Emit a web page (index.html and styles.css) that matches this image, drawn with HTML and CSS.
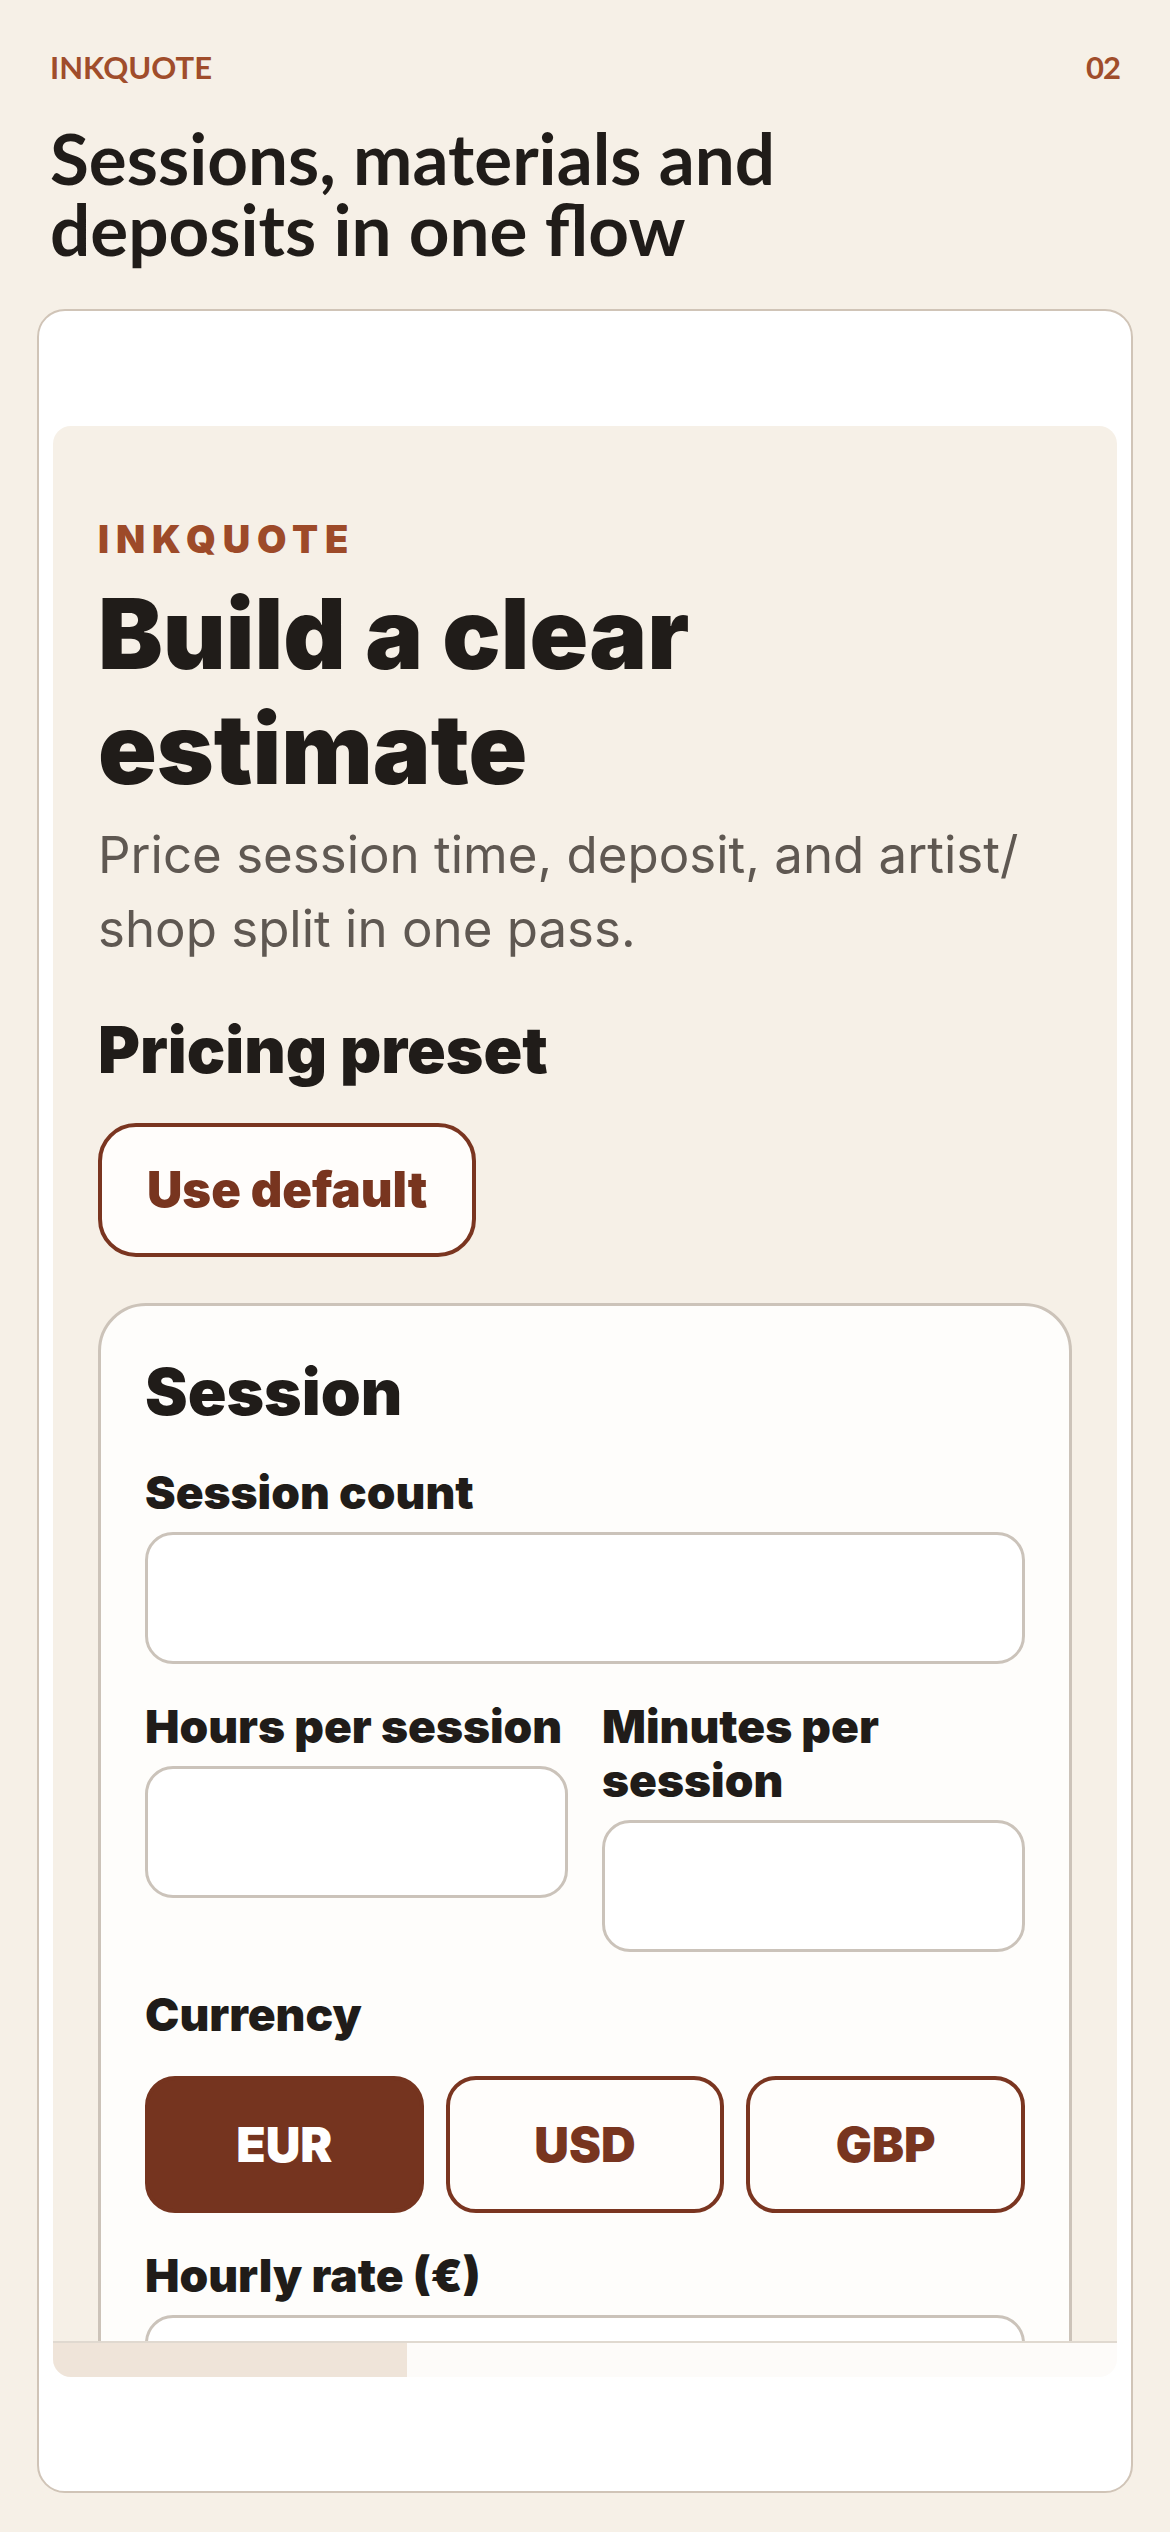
FILE: index.html
```html
<!DOCTYPE html>
<html lang="en">
<head>
<meta charset="utf-8">
<title>InkQuote – Sessions, materials and deposits</title>
<link rel="stylesheet" href="styles.css">
</head>
<body>
<header class="top">
  <span class="brand">INKQUOTE</span>
  <span class="num">02</span>
</header>
<h1 class="title">Sessions, materials and deposits in one flow</h1>

<section class="device">
  <div class="frame">
    <div class="viewport">
      <div class="app">
        <p class="eyebrow">INKQUOTE</p>
        <h2 class="hero">Build a clear estimate</h2>
        <p class="lede">Price session time, deposit, and artist/<wbr>shop split in one pass.</p>
        <h3 class="section-title preset-title">Pricing preset</h3>
        <button class="btn-outline" type="button">Use default</button>

        <div class="card">
          <h3 class="section-title">Session</h3>
          <label class="field">
            <span class="label">Session count</span>
            <input class="input" type="text">
          </label>
          <div class="row">
            <label class="field">
              <span class="label">Hours per session</span>
              <input class="input" type="text">
            </label>
            <label class="field">
              <span class="label">Minutes per session</span>
              <input class="input" type="text">
            </label>
          </div>
          <div class="label">Currency</div>
          <div class="seg">
            <button class="seg-btn active" type="button">EUR</button>
            <button class="seg-btn" type="button">USD</button>
            <button class="seg-btn" type="button">GBP</button>
          </div>
          <label class="field">
            <span class="label">Hourly rate (€)</span>
            <input class="input" type="text">
          </label>
        </div>
      </div>
    </div>
    <div class="scrollbar"><div class="thumb"></div></div>
  </div>
</section>
</body>
</html>
```

FILE: styles.css
```css
* { box-sizing: border-box; }

body {
  margin: 0;
  background: #f6f0e7;
  padding: 48px 37px 39px;
  font-family: Inter, "Noto Sans", sans-serif;
  font-optical-sizing: none;
  color: #201c19;
}

.top {
  display: flex;
  justify-content: space-between;
  padding: 0 13px;
  font-family: Lato, "Open Sans", sans-serif;
  font-weight: 700;
  font-size: 31px;
  line-height: 38px;
  color: #a04d2b;
}

.num {
  letter-spacing: -0.03em;
}

.title {
  margin: 36px 13px 45px;
  max-width: 900px;
  font-family: Lato, "Open Sans", sans-serif;
  font-weight: 700;
  font-size: 71px;
  line-height: 71px;
  color: #201c19;
}

.device {
  background: #ffffff;
  border: 2px solid #d0c4b7;
  border-radius: 28px;
  padding: 115px 14px 114px;
}

.frame {
  border-radius: 18px;
  overflow: hidden;
}

.viewport {
  height: 1915px;
  overflow: hidden;
  background: #f6f0e7;
}

.app {
  padding: 90px 45px 60px;
  display: flex;
  flex-direction: column;
  align-items: flex-start;
}

.eyebrow {
  margin: 0 0 14px;
  font-weight: 900;
  font-size: 38px;
  line-height: 46px;
  letter-spacing: 0.18em;
  color: #9d4a29;
}

.hero {
  margin: 0 0 12px;
  font-weight: 900;
  font-size: 97px;
  line-height: 115px;
  color: #201c19;
}

.lede {
  margin: 0 0 46px;
  font-weight: 400;
  font-size: 51px;
  line-height: 74px;
  color: #5f5852;
}

.section-title {
  margin: 0;
  font-weight: 900;
  font-size: 64px;
  line-height: 76px;
  color: #201c19;
}

.preset-title {
  margin-bottom: 35px;
}

.btn-outline {
  font-family: Inter, "Noto Sans", sans-serif;
  font-optical-sizing: none;
  font-weight: 900;
  font-size: 49px;
  line-height: 58px;
  color: #78351f;
  background: #fffdfb;
  border: 4px solid #7a3520;
  border-radius: 38px;
  padding: 34px 45px;
  margin-bottom: 46px;
}

.card {
  align-self: stretch;
  background: #fefdfb;
  border: 3px solid #ccc3b9;
  border-radius: 48px;
  padding: 48px 44px 60px;
  display: flex;
  flex-direction: column;
  gap: 35px;
}

.field {
  display: flex;
  flex-direction: column;
  gap: 13px;
}

.label {
  font-weight: 900;
  font-size: 46px;
  line-height: 54px;
  color: #201c19;
}

.input {
  display: block;
  width: 100%;
  height: 132px;
  border: 3px solid #cbc3ba;
  border-radius: 28px;
  background: #ffffff;
  font: inherit;
}

.row {
  display: grid;
  grid-template-columns: 1fr 1fr;
  gap: 34px;
  align-items: start;
}

.seg {
  display: grid;
  grid-template-columns: repeat(3, 1fr);
  gap: 22px;
}

.seg-btn {
  height: 137px;
  border: 4px solid #7a3520;
  border-radius: 30px;
  background: #fffdfb;
  color: #78351f;
  font-family: Inter, "Noto Sans", sans-serif;
  font-optical-sizing: none;
  font-weight: 900;
  font-size: 48px;
}

.seg-btn.active {
  background: #75341f;
  border-color: #75341f;
  color: #ffffff;
}

.scrollbar {
  height: 36px;
  border-top: 2px solid #e0d9d0;
  background: #fdfbf9;
}

.thumb {
  width: 354px;
  height: 100%;
  background: #efe4d9;
}
```
